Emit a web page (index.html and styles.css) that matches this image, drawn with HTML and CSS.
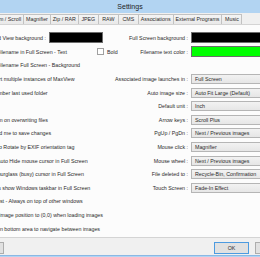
FILE: index.html
```html
<!DOCTYPE html>
<html lang="en">
<head>
  <meta charset="UTF-8">
  <title>Settings</title>
  <link rel="stylesheet" href="styles.css">
</head>
<body>
  <div class="window">
    <div class="titlebar">Settings</div>

    <div class="client">
      <!-- Tab strip -->
      <div class="tabs">
        <span class="tab">General</span>
        <span class="tab">Zoom / Scroll</span>
        <span class="tab">Magnifier</span>
        <span class="tab">Zip / RAR</span>
        <span class="tab">JPEG</span>
        <span class="tab">RAW</span>
        <span class="tab">CMS</span>
        <span class="tab">Associations</span>
        <span class="tab">External Programs</span>
        <span class="tab">Music</span>
      </div>

      <!-- General page -->
      <div class="panel">
        <div class="col-left">
          <div class="row">
            <span class="label-color">Grid View background :</span>
            <span class="swatch swatch-black"></span>
          </div>
          <div class="row row-text">
            <span class="label-font">Filename in Full Screen - Text</span>
            <span class="check"></span>
            <span>Bold</span>
          </div>
          <div class="row row-text">Filename Full Screen - Background</div>
          <div class="row row-sub"><span class="check"></span>Start multiple instances of MaxView</div>
          <div class="row"><span class="check"></span>Remember last used folder</div>
          <div class="row"></div>
          <div class="row"><span class="check"></span>Confirm on overwriting files</div>
          <div class="row"><span class="check"></span>Remind me to save changes</div>
          <div class="row row-sub"><span class="check"></span>Auto Rotate by EXIF orientation tag</div>
          <div class="row row-sub2"><span class="check"></span>Auto Hide mouse cursor in Full Screen</div>
          <div class="row row-wide"><span class="check"></span>Show hourglass (busy) cursor in Full Screen</div>
          <div class="row"><span class="check"></span>Always show Windows taskbar in Full Screen</div>
          <div class="row"><span class="check"></span>Topmost - Always on top of other windows</div>
          <div class="row"><span class="check"></span>Reset image position to (0,0) when loading images</div>
          <div class="row"><span class="check"></span>Click on bottom area to navigate between images</div>
        </div>

        <div class="col-right">
          <span class="label">Full Screen background :</span>
          <span class="swatch swatch-black"></span>
          <span class="label">Filename text color :</span>
          <span class="swatch swatch-green"></span>
          <span></span>
          <span></span>
          <span class="label">Associated image launches in :</span>
          <span class="combo">Full Screen</span>
          <span class="label">Auto image size :</span>
          <span class="combo">Auto Fit Large (Default)</span>
          <span class="label">Default unit :</span>
          <span class="combo">Inch</span>
          <span class="label">Arrow keys :</span>
          <span class="combo">Scroll Plus</span>
          <span class="label">PgUp / PgDn :</span>
          <span class="combo">Next / Previous images</span>
          <span class="label">Mouse click :</span>
          <span class="combo">Magnifier</span>
          <span class="label">Mouse wheel :</span>
          <span class="combo">Next / Previous images</span>
          <span class="label">File deleted to :</span>
          <span class="combo">Recycle-Bin, Confirmation</span>
          <span class="label">Touch Screen :</span>
          <span class="combo">Fade-In Effect</span>
        </div>
      </div>

      <div class="footer">
        <button class="btn btn-wide">Defaults</button>
        <div class="footer-right">
          <button class="btn btn-default">OK</button>
          <button class="btn">Cancel</button>
        </div>
      </div>
    </div>
  </div>
</body>
</html>
```

FILE: styles.css
```css
body {
    margin: 0;
    width: 260px;
    height: 257px;
    overflow: hidden;
    background-color: #9cc5ec;
    font-family: 'Liberation Sans', Arial, sans-serif;
    font-size: 5.3px;
    color: #2a2a2a;
}

/* the dialog is wider than the screenshot, it is cropped on both sides */
.window {
    width: 360px;
    margin-left: -50px;
    background-color: #b2d4f2;
    padding-bottom: 4px;
}

.titlebar {
    height: 13px;
    line-height: 13px;
    text-align: center;
    font-size: 7px;
    color: #222;
}

.client {
    margin: 0 8px;
    background-color: #f0f0f0;
    padding: 1px 0 1px 0;
    border-bottom: 1px solid #8ab8e4;
}

.tabs {
    display: flex;
    padding-left: 5px;
    height: 10px;
}

.tab {
    min-width: 15px;
    padding: 0 2px;
    border: 1px solid #c2c2c2;
    border-bottom: none;
    margin-right: -1px;
    text-align: center;
    line-height: 9px;
    background: linear-gradient(#f4f4f4, #e9e9e9);
}

.panel {
    display: flex;
    background-color: #fcfcfc;
    border: 1px solid #d4d4d4;
    padding: 5px 0 2px 0;
}

.col-left,
.col-right {
    display: grid;
    grid-template-rows: 15px repeat(14, 13.6px);
}

.col-left {
    width: 136px;
    padding-left: 15px;
}

.row {
    display: flex;
    align-items: center;
    white-space: nowrap;
}

.row-sub {
    padding-left: 7px;
}

.row-sub2 {
    padding-left: 13px;
}

.row-wide {
    margin-left: -4px;
}

.row-text {
    padding-left: 23px;
}

.label-color {
    width: 72px;
    flex-shrink: 0;
    text-align: right;
    margin-right: 3px;
}

.label-font {
    width: 100px;
    flex-shrink: 0;
}

.check {
    width: 5px;
    height: 5px;
    flex-shrink: 0;
    border: 1px solid #a0a0a0;
    background-color: #fff;
    margin-right: 3px;
}

.col-right {
    grid-template-columns: 78px 90px;
    column-gap: 3px;
    align-items: center;
    white-space: nowrap;
}

.col-right .label {
    text-align: right;
}

.swatch {
    height: 9px;
    border: 1px solid #6d6d6d;
}

.col-left .swatch {
    width: 52px;
    flex-shrink: 0;
}

.swatch-black {
    background-color: #000;
}

.swatch-green {
    background-color: #00ff00;
}

.combo {
    height: 8px;
    line-height: 8px;
    padding-left: 3px;
    border: 1px solid #b5b5b5;
    background: linear-gradient(#f2f2f2, #e6e6e6);
}

.footer {
    display: flex;
    justify-content: space-between;
    padding: 4px 12px 0 4px;
}

.footer-right {
    display: flex;
    gap: 6px;
}

.btn {
    font-family: 'Liberation Sans', Arial, sans-serif;
    font-size: 5.3px;
    width: 35px;
    height: 12px;
    padding: 0;
    border: 1px solid #adadad;
    background-color: #e1e1e1;
    color: #2a2a2a;
}

.btn-wide {
    width: 42px;
}

.btn-default {
    border-color: #4d9be0;
}
```
